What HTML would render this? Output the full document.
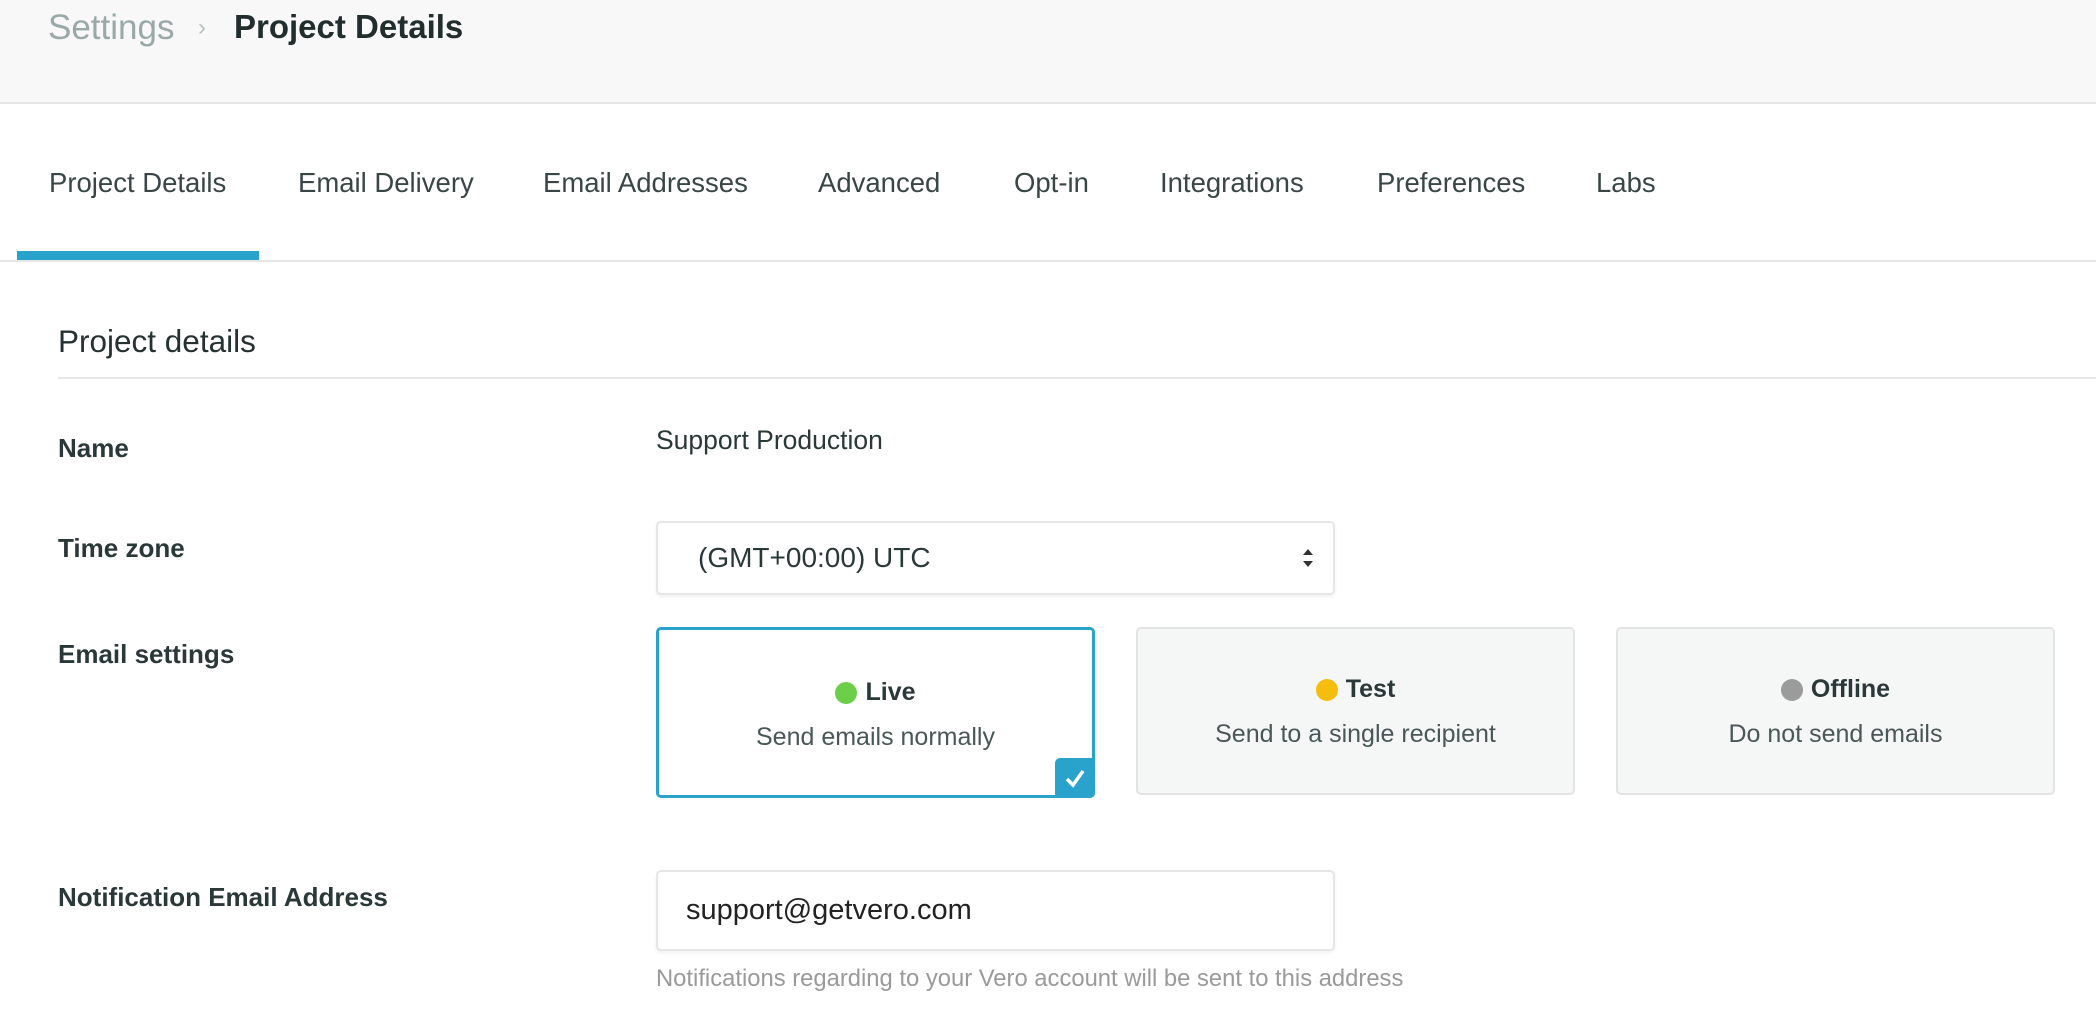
<!DOCTYPE html>
<html><head><meta charset="utf-8"><style>
*{box-sizing:border-box;margin:0;padding:0}
body{width:2096px;height:1010px;overflow:hidden;background:#fff;font-family:"Liberation Sans",sans-serif;color:#2b3838;position:relative}
.a{position:absolute;white-space:nowrap}
.hdr{position:absolute;left:0;top:0;width:2096px;height:104px;background:#f8f8f8;border-bottom:2px solid #e6e6e6}
.tab{position:absolute;top:167px;font-size:27.5px;color:#3a4646}
.lbl{font-size:26px;font-weight:bold;left:58px}
.card{position:absolute;top:627px;width:439px;height:168px;background:#f5f6f6;border:2px solid #e3e3e3;border-radius:5px;text-align:center}
.card .t{margin-top:46px;font-size:25px;font-weight:bold;display:flex;justify-content:center;align-items:center;gap:8px}
.card .s{margin-top:16px;font-size:25px;color:#4a5757}
.dot{width:22px;height:22px;border-radius:50%;display:inline-block}
.box{position:absolute;left:656px;width:679px;background:#fff;border:2px solid #e6e6e6;border-radius:5px;box-shadow:0 2px 3px rgba(0,0,0,.06)}
</style></head><body>
<div class="hdr"></div>
<div class="a" style="left:48px;top:8px;font-size:35px;color:#9aa8a8">Settings</div>
<div class="a" style="left:198px;top:14px;font-size:24px;color:#b5bfbf">›</div>
<div class="a" style="left:234px;top:8px;font-size:33px;font-weight:bold;color:#222e2e">Project Details</div>

<div class="tab a" style="left:49px">Project Details</div>
<div class="tab a" style="left:298px">Email Delivery</div>
<div class="tab a" style="left:543px">Email Addresses</div>
<div class="tab a" style="left:818px">Advanced</div>
<div class="tab a" style="left:1014px">Opt-in</div>
<div class="tab a" style="left:1160px">Integrations</div>
<div class="tab a" style="left:1377px">Preferences</div>
<div class="tab a" style="left:1596px">Labs</div>
<div class="a" style="left:0;top:260px;width:2096px;height:2px;background:#e6e6e6"></div>
<div class="a" style="left:17px;top:251px;width:242px;height:9px;background:#2aa3cc"></div>

<div class="a" style="left:58px;top:323px;font-size:31.5px;color:#263232">Project details</div>
<div class="a" style="left:58px;top:377px;width:2038px;height:2px;background:#e8e8e8"></div>

<div class="a lbl" style="top:433px">Name</div>
<div class="a" style="left:656px;top:425px;font-size:26.5px">Support Production</div>

<div class="a lbl" style="top:533px">Time zone</div>
<div class="box" style="top:521px;height:74px"></div>
<div class="a" style="left:698px;top:542px;font-size:28px">(GMT+00:00) UTC</div>
<svg class="a" style="left:1300px;top:546px" width="16" height="24" viewBox="0 0 16 24"><path d="M3 9 L8 3 L13 9Z M3 15 L8 21 L13 15Z" fill="#333"/></svg>

<div class="a lbl" style="top:639px">Email settings</div>
<div class="card" style="left:656px;width:439px;height:171px;background:#fff;border:3px solid #2aa3cc">
 <div class="t" style="margin-top:48px"><span class="dot" style="background:#6ccf4a"></span>Live</div>
 <div class="s">Send emails normally</div>
 <div style="position:absolute;right:-3px;bottom:-3px;width:40px;height:40px;background:#2aa3cc;border-radius:5px 0 5px 0"><svg width="40" height="40" viewBox="0 0 40 40"><path d="M12 21 L18 27 L28 13" stroke="#fff" stroke-width="3.5" fill="none"/></svg></div>
</div>
<div class="card" style="left:1136px">
 <div class="t"><span class="dot" style="background:#f5bd0e"></span>Test</div>
 <div class="s">Send to a single recipient</div>
</div>
<div class="card" style="left:1616px">
 <div class="t"><span class="dot" style="background:#9b9b9b"></span>Offline</div>
 <div class="s">Do not send emails</div>
</div>

<div class="a lbl" style="top:882px">Notification Email Address</div>
<div class="box" style="top:870px;height:81px"></div>
<div class="a" style="left:686px;top:894px;font-size:29px;color:#222">support@getvero.com</div>
<div class="a" style="left:656px;top:965px;font-size:23.8px;color:#9a9a9a">Notifications regarding to your Vero account will be sent to this address</div>
</body></html>
